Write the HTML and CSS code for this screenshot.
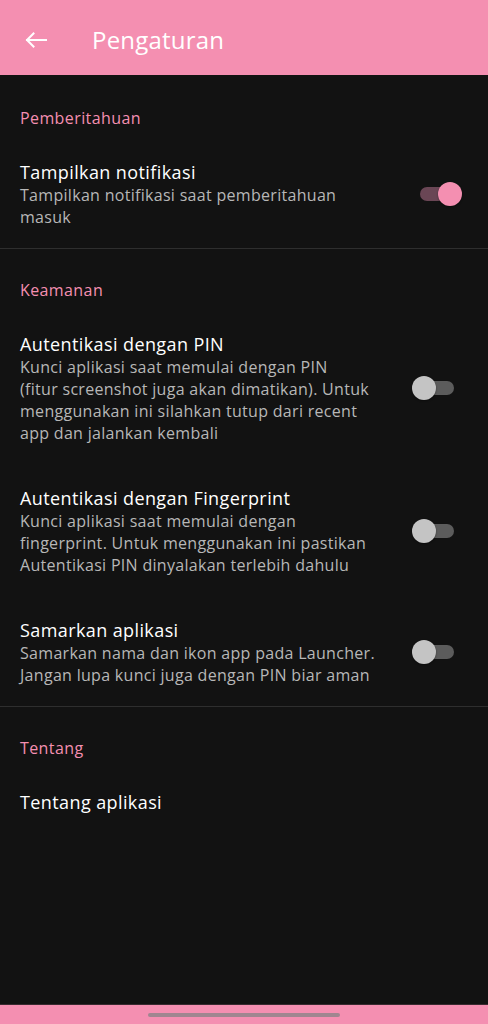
FILE: index.html
```html
<!DOCTYPE html>
<html lang="id">
<head>
    <meta charset="UTF-8">
    <meta name="viewport" content="width=device-width, initial-scale=1.0">
    <title>Pengaturan</title>
    <link rel="stylesheet" href="styles.css">
</head>
<body>
    <div class="app">
        <header class="appbar">
            <button class="back-btn" aria-label="Kembali">
                <svg width="22" height="16" viewBox="0 0 22 16">
                    <path d="M21 8H2M8.5 1.5L2 8l6.5 6.5" fill="none" stroke="#fff" stroke-width="2" stroke-linecap="square"/>
                </svg>
            </button>
            <h1>Pengaturan</h1>
        </header>

        <main class="settings">
            <section class="category">
                <div class="category-title">Pemberitahuan</div>
                <div class="pref">
                    <div class="pref-text">
                        <div class="pref-title">Tampilkan notifikasi</div>
                        <div class="pref-summary">Tampilkan notifikasi saat pemberitahuan masuk</div>
                    </div>
                    <div class="switch on"><span class="track"></span><span class="thumb"></span></div>
                </div>
            </section>

            <section class="category">
                <div class="category-title">Keamanan</div>
                <div class="pref">
                    <div class="pref-text">
                        <div class="pref-title">Autentikasi dengan PIN</div>
                        <div class="pref-summary">Kunci aplikasi saat memulai dengan PIN<br>(fitur screenshot juga akan dimatikan). Untuk menggunakan ini silahkan tutup dari recent app dan jalankan kembali</div>
                    </div>
                    <div class="switch"><span class="track"></span><span class="thumb"></span></div>
                </div>
                <div class="pref">
                    <div class="pref-text">
                        <div class="pref-title">Autentikasi dengan Fingerprint</div>
                        <div class="pref-summary">Kunci aplikasi saat memulai dengan fingerprint. Untuk menggunakan ini pastikan Autentikasi PIN dinyalakan terlebih dahulu</div>
                    </div>
                    <div class="switch"><span class="track"></span><span class="thumb"></span></div>
                </div>
                <div class="pref">
                    <div class="pref-text">
                        <div class="pref-title">Samarkan aplikasi</div>
                        <div class="pref-summary">Samarkan nama dan ikon app pada Launcher. Jangan lupa kunci juga dengan PIN biar aman</div>
                    </div>
                    <div class="switch"><span class="track"></span><span class="thumb"></span></div>
                </div>
            </section>

            <section class="category last">
                <div class="category-title">Tentang</div>
                <div class="pref">
                    <div class="pref-text">
                        <div class="pref-title">Tentang aplikasi</div>
                    </div>
                </div>
            </section>
        </main>

        <footer class="navbar">
            <span class="handle"></span>
        </footer>
    </div>
</body>
</html>
```

FILE: styles.css
```css
* {
    box-sizing: border-box;
}

body {
    margin: 0;
    padding: 0;
    background-color: #121212;
    font-family: "Open Sans", Roboto, sans-serif;
}

.app {
    display: flex;
    flex-direction: column;
    height: 1024px;
}

.appbar {
    height: 75px;
    background-color: #f48fb1;
    display: flex;
    align-items: center;
    padding-left: 25px;
    flex-shrink: 0;
}

.back-btn {
    background: none;
    border: none;
    padding: 0;
    display: flex;
    align-items: center;
    width: 67px;
    height: 24px;
    margin-top: 5px;
    cursor: pointer;
}

.appbar h1 {
    margin: 0;
    color: #ffffff;
    font-size: 24px;
    font-weight: 400;
    letter-spacing: 0.2px;
    margin-top: 4px;
}

.settings {
    flex: 1;
}

.category {
    border-bottom: 1px solid #2e2e2e;
}

.category.last {
    border-bottom: none;
}

.category-title {
    padding: 32px 20px 11px;
    color: #f48fb1;
    font-size: 16px;
    letter-spacing: 0.4px;
    line-height: 22px;
}

.category + .category .category-title {
    padding-top: 30px;
}

.pref {
    display: flex;
    align-items: center;
    padding: 20px 0 20px 20px;
}

.pref + .pref {
    padding-top: 22px;
}

.pref-text {
    flex: 1;
    padding-right: 28px;
}

.pref-title {
    color: #ffffff;
    font-size: 18px;
    letter-spacing: 0.4px;
    line-height: 24px;
}

.pref-summary {
    color: #b7b7b7;
    font-size: 16px;
    letter-spacing: 0.3px;
    line-height: 22px;
}

.switch {
    position: relative;
    width: 50px;
    height: 24px;
    margin-right: 26px;
    flex-shrink: 0;
}

.switch .track {
    position: absolute;
    left: 8px;
    top: 5px;
    width: 34px;
    height: 14px;
    border-radius: 7px;
    background-color: #5c5c5c;
}

.switch .thumb {
    position: absolute;
    left: 0;
    top: 0;
    width: 24px;
    height: 24px;
    border-radius: 50%;
    background-color: #c4c4c4;
    box-shadow: 0 1px 2px rgba(0, 0, 0, 0.4);
}

.switch.on .track {
    background-color: #6a4655;
}

.switch.on .thumb {
    left: 26px;
    background-color: #f48fb1;
}

.navbar {
    height: 20px;
    background-color: #f48fb1;
    border-top: 1px solid #3a2a30;
    display: flex;
    justify-content: center;
    padding-top: 8px;
    flex-shrink: 0;
}

.handle {
    width: 192px;
    height: 4px;
    border-radius: 2px;
    background-color: #a08690;
}
```
